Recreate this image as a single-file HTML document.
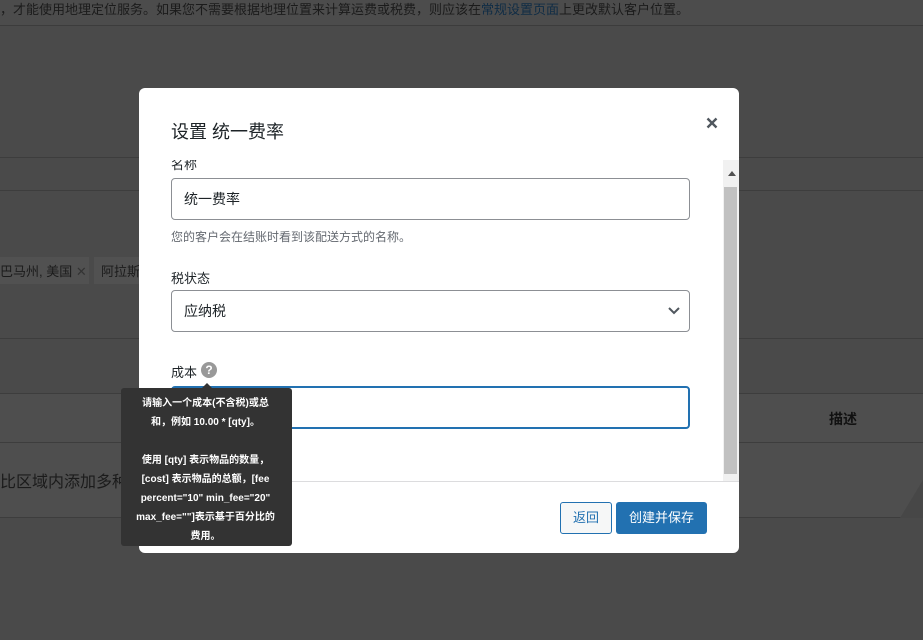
<!DOCTYPE html>
<html><head><meta charset="utf-8"><style>
*{box-sizing:border-box;margin:0;padding:0}
body{width:923px;height:640px;overflow:hidden;background:#4a4a4a;font-family:"Liberation Sans","Noto Sans CJK SC",sans-serif;position:relative;color:#1d2327}
.abs{position:absolute}
.line{position:absolute;left:0;right:0;height:1px;background:#3d3d3d}
.lbl{position:absolute;left:171px;font-size:13px;color:#1d2327}
.inp{position:absolute;left:171px;width:519px;border:1px solid #8c8f94;border-radius:4px;font-size:14px;padding-left:12px;display:flex;align-items:center}
</style></head><body>
<div class="abs" style="left:0;top:0;width:923px;height:26px;background:#4c4c4c;border-bottom:1px solid #3c3c3c"></div>
<div class="abs" style="left:0;top:-1px;font-size:13px;color:#1b1b1b;white-space:nowrap">，才能使用地理定位服务。如果您不需要根据地理位置来计算运费或税费，则应该在<span style="color:#0f2c45">常规设置页面</span>上更改默认客户位置。</div>
<div class="line" style="top:157px"></div>
<div class="line" style="top:190px"></div>
<div class="abs" style="left:0;top:257px;width:89px;height:27px;background:#515151"></div>
<div class="abs" style="left:0;top:261px;font-size:13px;color:#1b1b1b">巴马州, 美国 <span style="color:#333">✕</span></div>
<div class="abs" style="left:94px;top:257px;width:50px;height:27px;background:#515151"></div>
<div class="abs" style="left:101px;top:261px;font-size:13px;color:#1b1b1b">阿拉斯</div>
<div class="line" style="top:338px"></div>
<div class="abs" style="left:0;top:393px;width:923px;height:125px;background:#4e4e4e;border-top:1px solid #3d3d3d;border-bottom:1px solid #3d3d3d"></div>
<div class="line" style="top:442px"></div>
<div class="abs" style="left:829px;top:409px;font-size:14px;font-weight:bold;color:#111">描述</div>
<div class="abs" style="left:0;top:468px;font-size:16px;color:#1b1b1b">比区域内添加多种</div>
<div class="abs" style="left:900px;top:480px;width:0;height:0;border-left:23px solid transparent;border-bottom:38px solid #474747"></div>

<div class="abs" style="left:139px;top:88px;width:600px;height:465px;background:#fff;border-radius:6px;overflow:hidden">
 <div class="abs" style="left:32px;top:30px;font-size:18px;color:#1d2327">设置 统一费率</div>
 <svg class="abs" style="left:567px;top:29px" width="12" height="12" viewBox="0 0 12 12"><path d="M1.5 1.5l9 9M10.5 1.5l-9 9" stroke="#50575e" stroke-width="2.4"/></svg>
 <div class="abs" style="left:0;top:72px;width:600px;height:321px;overflow:hidden">
  <div class="lbl" style="left:32px;top:-6px">名称</div>
  <div class="inp" style="left:32px;top:18px;height:42px">统一费率</div>
  <div class="lbl" style="left:32px;top:68px;font-size:12px;color:#646970">您的客户会在结账时看到该配送方式的名称。</div>
  <div class="lbl" style="left:32px;top:108px">税状态</div>
  <div class="inp" style="left:32px;top:130px;height:42px">应纳税
   <svg style="position:absolute;right:8px;top:15px" width="14" height="10" viewBox="0 0 14 10"><path d="M2 2l5 5 5-5" stroke="#50575e" stroke-width="2" fill="none"/></svg></div>
  <div class="lbl" style="left:32px;top:202px">成本</div>
  <div class="abs" style="left:62px;top:202px;width:16px;height:16px;border-radius:50%;background:#999;color:#fff;font-size:12px;font-weight:bold;text-align:center;line-height:16px">?</div>
  <div class="inp" style="left:32px;top:226px;height:43px;border:2px solid #2271b1"></div>
  <div class="abs" style="left:584px;top:0;width:16px;height:321px;background:#f1f1f1"></div>
  <div class="abs" style="left:589px;top:11px;border-left:4px solid transparent;border-right:4px solid transparent;border-bottom:5px solid #505050"></div>
  <div class="abs" style="left:585px;top:27px;width:13px;height:287px;background:#c1c1c1"></div>
 </div>
 <div class="abs" style="left:0;top:393px;width:600px;height:1px;background:#dcdcde"></div>
 <div class="abs" style="left:421px;top:414px;width:52px;height:32px;border:1px solid #2271b1;border-radius:3px;background:#f6f7f7;color:#2271b1;font-size:13px;text-align:center;line-height:30px">返回</div>
 <div class="abs" style="left:477px;top:414px;width:91px;height:32px;border-radius:3px;background:#2271b1;color:#fff;font-size:13px;text-align:center;line-height:32px">创建并保存</div>
</div>

<div class="abs" style="left:121px;top:388px;width:171px;height:158px;background:#333;border-radius:3px;color:#fff;font-size:10px;font-weight:bold;text-align:center;line-height:19px;padding:6px 14px 6px 12px">
 <div class="abs" style="left:81px;top:-5px;border-left:5px solid transparent;border-right:5px solid transparent;border-bottom:5px solid #333"></div>
 请输入一个成本(不含税)或总和，例如 10.00 * [qty]。<br><br>使用 [qty] 表示物品的数量，[cost] 表示物品的总额，[fee percent="10" min_fee="20" max_fee=""]表示基于百分比的费用。
</div>
</body></html>
